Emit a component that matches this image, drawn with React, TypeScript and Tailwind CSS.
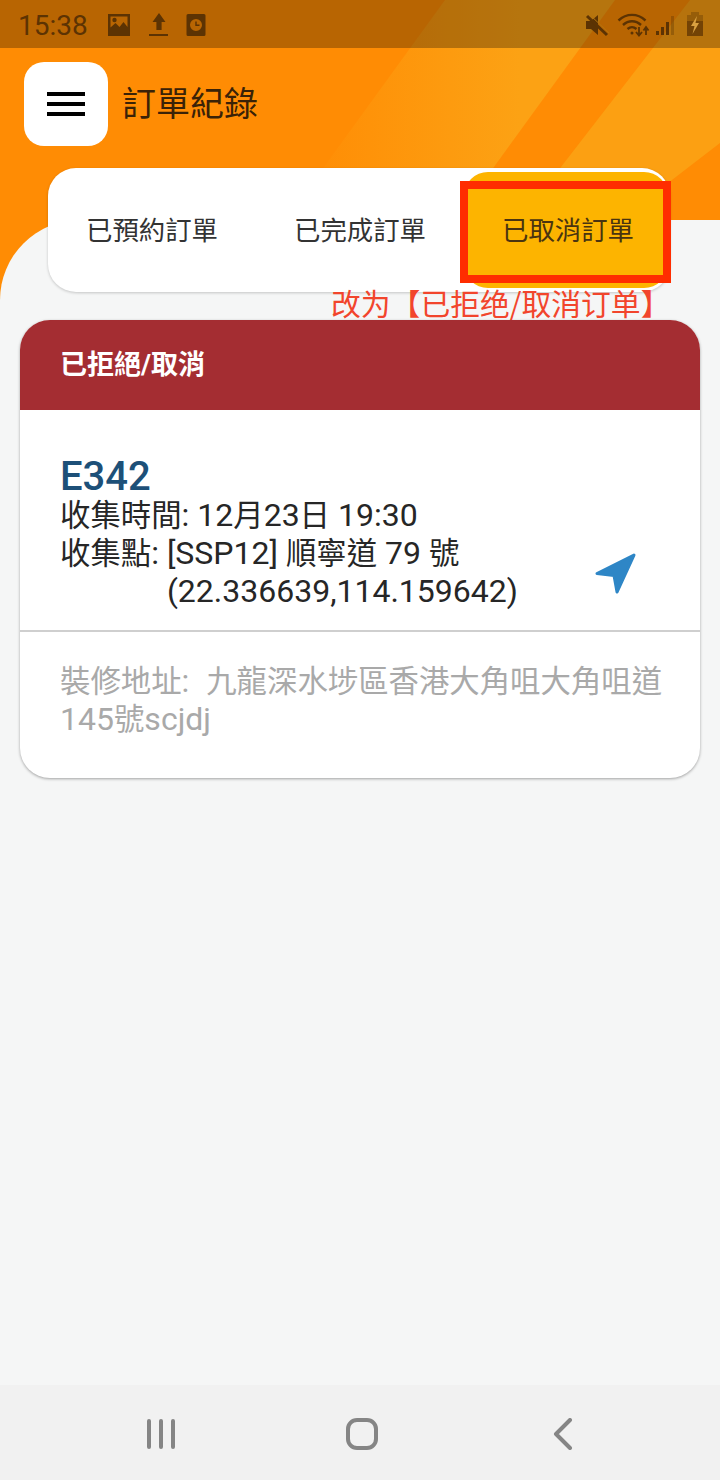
import { ReactNode } from "react";

const FONT = "font-[Roboto,'Noto_Sans_CJK_TC',sans-serif]";

const StatusLeftIcons = () => (
  <div className="ml-[19px] flex items-center text-[#5c3303]">
    <svg width="24" height="24" viewBox="0 0 24 24" fill="currentColor">
      <path fillRule="evenodd" d="M1 1h22v22H1z M3.500 3.500v11l5-4.500 4 4 4-5 4 5V3.500z" />
      <circle cx="7.500" cy="7" r="2.200" />
    </svg>
    <svg className="ml-[17px]" width="22" height="26" viewBox="0 0 22 26" fill="currentColor">
      <path d="M11 1l6.500 9H13.600v8H8.400v-8H4.500z" />
      <rect x="1" y="22" width="19" height="2" />
    </svg>
    <svg className="ml-[16px]" width="20" height="24" viewBox="0 0 20 24" fill="currentColor">
      <path fillRule="evenodd" d="M2 1h16a1.500 1.500 0 0 1 1.500 1.500v19A1.500 1.500 0 0 1 18 23H2a1.500 1.500 0 0 1-1.500-1.500v-19A1.500 1.500 0 0 1 2 1zM10 6a6 6 0 1 0 0 12 6 6 0 0 0 0-12z" />
      <path d="M9.300 8.500h1.400v3h2.800v1.400H9.300z" />
    </svg>
  </div>
);

const StatusRightIcons = () => (
  <div className="flex items-center text-[#5c3303]">
    <svg width="24" height="24" viewBox="0 0 24 24" fill="currentColor">
      <path d="M1 8h5l7-6v20l-7-6H1z" />
      <path d="M2 3l20 19" stroke="currentColor" strokeWidth="3" />
      <path d="M2 3l20 19" stroke="#b5750f" strokeWidth="1" transform="translate(2,-2)" />
    </svg>
    <svg className="ml-[8px]" width="33" height="26" viewBox="0 0 33 26" fill="none" stroke="currentColor" strokeWidth="2.400">
      <path d="M1.500 8.500C9.500 1 20.500 1 28.500 8.500" />
      <path d="M6 13c5.500-5 12.500-5 18 0" />
      <path d="M10.500 17c3-2.500 6-2.500 9 0" />
      <circle cx="15" cy="21" r="1.500" fill="currentColor" stroke="none" />
      <path d="M22 15v8m-3-3l3 3.500 3-3.500M29 23v-7m-2.500 2.500L29 15l2.500 3.500" strokeWidth="1.800" />
    </svg>
    <svg className="ml-[5px]" width="22" height="24" viewBox="0 0 22 24" fill="currentColor">
      <rect x="1" y="18" width="3" height="4" />
      <rect x="6" y="14" width="3" height="8" />
      <rect x="11" y="9" width="3" height="13" />
      <rect x="16" y="3" width="3" height="19" opacity="0.35" />
    </svg>
    <svg className="ml-[9px]" width="18" height="28" viewBox="0 0 18 28" fill="currentColor">
      <rect x="5" y="1" width="8" height="3" opacity="0.35" />
      <rect x="1" y="4" width="16" height="6" opacity="0.35" />
      <rect x="1" y="10" width="16" height="15" opacity="0.75" />
      <path d="M11 5L5 15h3.500L6.500 23 13 12H9.500z" fill="#d9a040" />
    </svg>
  </div>
);

const NavigateIcon = () => (
  <svg width="44" height="44" viewBox="0 0 44 44" className="mb-[15px] shrink-0">
    <path
      d="M40 3L3 21.500L20 23.500L23 40Z"
      fill="#2e86c6"
      stroke="#2e86c6"
      strokeWidth="3"
      strokeLinejoin="round"
    />
  </svg>
);

// latin runs sit a little bigger than the CJK ones in this screen
const L = ({ children }: { children: ReactNode }) => (
  <span className="whitespace-pre text-[32px] leading-none">{children}</span>
);

const tabs = [
  { label: "已預約訂單", className: "w-[208px] text-[#333333]" },
  { label: "已完成訂單", className: "w-[208px] text-[#333333]" },
  { label: "已取消訂單", className: "w-[204px] rounded-[24px] bg-[#fdb400] pl-[4px] text-[#4a3410]" },
];

export default function App() {
  return (
    <div className={`relative flex h-[1480px] w-[720px] flex-col overflow-hidden bg-[#f5f6f6] ${FONT}`}>
      {/* header backdrop */}
      <div className="absolute left-0 top-0 h-[300px] w-full bg-[#ff8c04]">
        <svg width="720" height="220" viewBox="0 0 720 220" className="absolute left-0 top-0">
          <defs>
            <linearGradient id="stripe" x1="300" y1="0" x2="520" y2="0" gradientUnits="userSpaceOnUse">
              <stop offset="0" stopColor="#fca214" stopOpacity="0" />
              <stop offset="1" stopColor="#fca214" />
            </linearGradient>
          </defs>
          <path d="M300 200L445 0H615L470 200Z" fill="url(#stripe)" />
          <path d="M520 220L690 0H720V143L620 220Z" fill="#fca012" />
        </svg>
      </div>
      <div className="absolute left-0 top-[220px] h-[100px] w-full rounded-tl-[80px] bg-[#f5f6f6]" />

      {/* status bar */}
      <div className="relative flex h-12 shrink-0 items-center bg-black/[0.28] pl-[18px] pr-[16px] pt-[2px]">
        <span className="pt-[2px] text-[28px] leading-none text-[#5c3303]">15:38</span>
        <StatusLeftIcons />
        <div className="flex-1" />
        <StatusRightIcons />
      </div>

      {/* toolbar */}
      <div className="relative ml-6 mt-[14px] flex items-center">
        <button className="flex h-[84px] w-[84px] flex-col items-center justify-center gap-[6px] rounded-[20px] bg-white">
          <span className="h-1 w-[38px] bg-black" />
          <span className="h-1 w-[38px] bg-black" />
          <span className="h-1 w-[38px] bg-black" />
        </button>
        <h1 className="ml-[14px] text-[34px] font-normal leading-none text-[#3a2207]">訂單紀錄</h1>
      </div>

      {/* tabs */}
      <div className="relative ml-12 mt-[22px] flex h-[124px] w-[622px] items-center rounded-[28px] bg-white shadow-[0_1px_3px_rgba(0,0,0,0.2)]">
        {tabs.map((tab) => (
          <div key={tab.label} className={`flex h-[116px] items-center justify-center pt-[3px] text-[26.400px] ${tab.className}`}>
            {tab.label}
          </div>
        ))}
      </div>

      {/* order card */}
      <div className="relative ml-5 mt-7 w-[680px] overflow-hidden rounded-[30px] bg-white shadow-[0_1px_3px_rgba(0,0,0,0.35)]">
        <div className="flex h-[90px] items-center bg-[#a42d32] pl-[40px] text-[27px] font-bold text-white">
          已拒絕/取消
        </div>
        <div className="flex items-end justify-between pb-[19px] pl-[40px] pr-[62px] pt-[46px]">
          <div className="text-[30.400px] leading-[38px] text-[#262626]">
            <div className="text-[40px] font-medium leading-[41px] text-[#1d5078]">E342</div>
            <div>
              收集時間<L>: 12</L>月<L>23</L>日<L> 19:30</L>
            </div>
            <div className="flex">
              <span>
                收集點<L>: </L>
              </span>
              <div>
                <div>
                  <L>[SSP12] </L>順寧道<L> 79 </L>號
                </div>
                <div>
                  <L>(22.336639,114.159642)</L>
                </div>
              </div>
            </div>
          </div>
          <NavigateIcon />
        </div>
        <div className="h-[2px] bg-[#cfcfcf]" />
        <div className="h-[146px] pl-[40px] pr-[30px] pt-[31px] text-[30.400px] leading-[38px] text-[#a9a9a9]">
          <div>
            裝修地址<span className="mr-[1px]"><L>:  </L></span>九龍深水埗區香港大角咀大角咀道
          </div>
          <div>
            <L>145</L>號<L>scjdj</L>
          </div>
        </div>
      </div>

      <div className="flex-1" />

      {/* navigation bar */}
      <div className="flex h-[95px] shrink-0 items-center bg-[#f1f1f1] pl-[60px] pt-[3px] text-[#858585]">
        <div className="flex w-[201px] justify-center">
          <svg width="30" height="30" viewBox="0 0 30 30" fill="none" stroke="currentColor" strokeWidth="4" strokeLinecap="round">
            <path d="M3 2v26M15 2v26M27 2v26" />
          </svg>
        </div>
        <div className="flex w-[201px] justify-center">
          <svg width="32" height="32" viewBox="0 0 32 32" fill="none" stroke="currentColor" strokeWidth="4">
            <rect x="2" y="2" width="28" height="28" rx="9" />
          </svg>
        </div>
        <div className="flex w-[201px] justify-center">
          <svg width="20" height="32" viewBox="0 0 20 32" fill="none" stroke="currentColor" strokeWidth="4" strokeLinecap="round" strokeLinejoin="round">
            <path d="M17 2L3 16l14 14" />
          </svg>
        </div>
      </div>

      {/* review annotation over the screenshot */}
      <div className="absolute left-[460px] top-[181px] h-[102px] w-[211px] border-[8px] border-[#ff2d00]" />
      <div className="absolute left-[331px] top-[284px] whitespace-nowrap font-['Noto_Sans_CJK_SC',sans-serif] text-[29.800px] leading-[36px] text-[#f2452c]">
        改为【已拒绝/取消订单】
      </div>
    </div>
  );
}
